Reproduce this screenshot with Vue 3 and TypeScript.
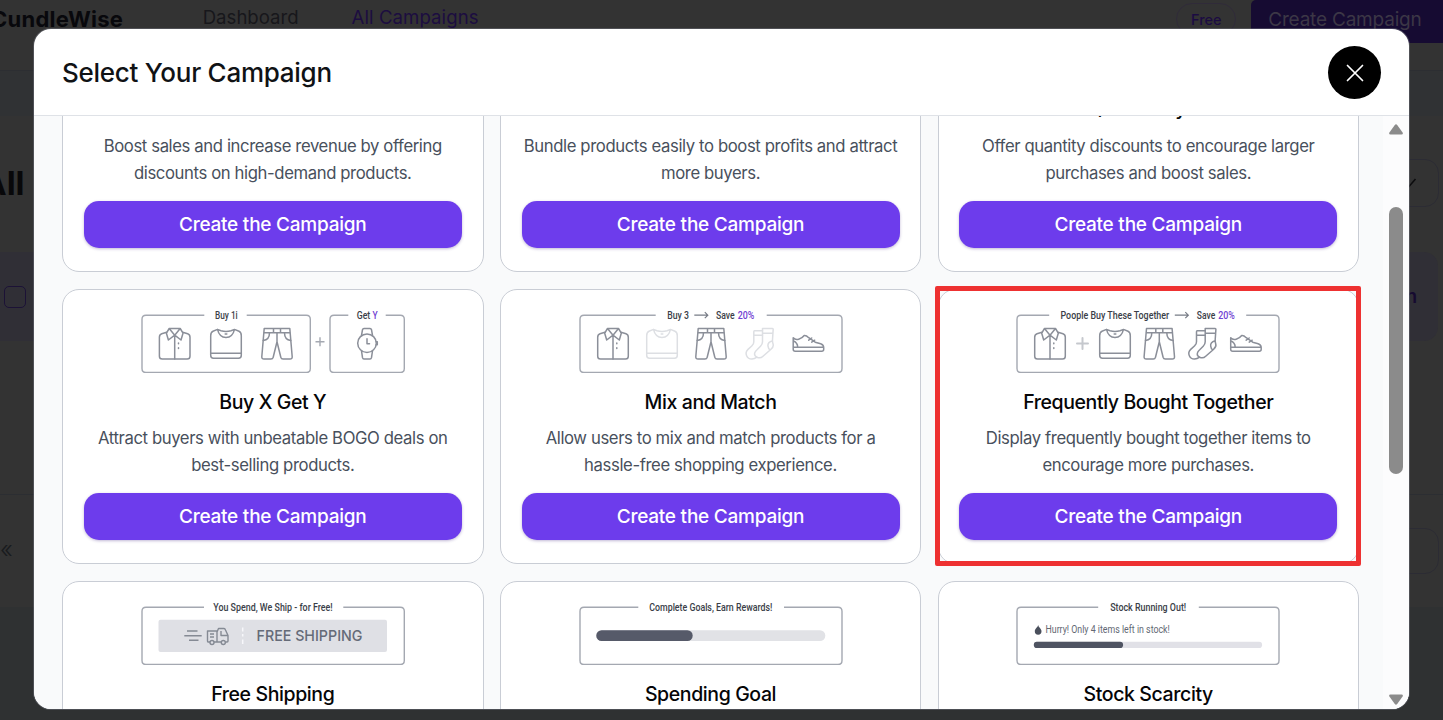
<script setup lang="ts">
interface Label { text: string; x: number; w: number; accent?: boolean }
interface Glyph { name: string; x: number; faint?: boolean }
interface Campaign {
  title: string
  lines: [string, string]
  frame: string[]
  labels: Label[]
  glyphs?: Glyph[]
  arrow?: number
  art?: 'shipping' | 'goal' | 'stock'
  highlighted?: boolean
}

// Frame outline with a gap in the top edge for the caption.
const frame = (left: number, right: number, gapStart: number, gapEnd: number): string =>
  `M${gapStart} 10.2H${left + 4}q-4 0-4 4V63.400q0 4 4 4H${right - 4}q4 0 4-4V14.200q0-4-4-4H${gapEnd}`

const campaigns: Campaign[] = [
  { title: 'Volume Discount', lines: ['Boost sales and increase revenue by offering', 'discounts on high-demand products.'], frame: [], labels: [] },
  { title: 'Bundle Discount', lines: ['Bundle products easily to boost profits and attract', 'more buyers.'], frame: [], labels: [] },
  { title: 'Volume / Quantity Discount', lines: ['Offer quantity discounts to encourage larger', 'purchases and boost sales.'], frame: [], labels: [] },
  {
    title: 'Buy X Get Y',
    lines: ['Attract buyers with unbeatable BOGO deals on', 'best-selling products.'],
    frame: [frame(1, 169.3, 63.3, 105.7), frame(189, 263.3, 207.3, 244.7), 'M174.5 36.7h9M179 32.2v9'],
    labels: [{ text: 'Buy 1i', x: 74, w: 22.7 }, { text: 'Get', x: 215.7, w: 13.6 }, { text: 'Y', x: 231.5, w: 5.2, accent: true }],
    glyphs: [{ name: 'shirt', x: 17.7 }, { name: 'sweater', x: 69 }, { name: 'pants', x: 120 }, { name: 'watch', x: 216 }],
  },
  {
    title: 'Mix and Match',
    lines: ['Allow users to mix and match products for a', 'hassle-free shopping experience.'],
    frame: [frame(1, 263, 76.7, 187.7)],
    labels: [{ text: 'Buy 3', x: 88.3, w: 21.7 }, { text: 'Save', x: 137, w: 18.7 }, { text: '20%', x: 158.7, w: 16.6, accent: true }],
    arrow: 115.3,
    glyphs: [{ name: 'shirt', x: 18 }, { name: 'sweater', x: 67, faint: true }, { name: 'pants', x: 116 }, { name: 'socks', x: 166.5, faint: true }, { name: 'shoe', x: 213.2 }],
  },
  {
    title: 'Frequently Bought Together',
    lines: ['Display frequently bought together items to', 'encourage more purchases.'],
    frame: [frame(1, 263, 33.2, 230.2)],
    labels: [{ text: 'Poople Buy These Together', x: 44.5, w: 108.7 }, { text: 'Save', x: 180.8, w: 18.4 }, { text: '20%', x: 202.2, w: 16.6, accent: true }],
    arrow: 158.8,
    glyphs: [{ name: 'shirt', x: 18 }, { name: 'plus', x: 61 }, { name: 'sweater', x: 83 }, { name: 'pants', x: 127.3 }, { name: 'socks', x: 172.2 }, { name: 'shoe', x: 213.7 }],
    highlighted: true,
  },
  { title: 'Free Shipping', lines: ['Offer free shipping to increase the', 'average order value.'], frame: [frame(1, 263.3, 63, 202.3)], labels: [{ text: 'You Spend, We Ship - for Free!', x: 72.3, w: 119.4 }], art: 'shipping' },
  { title: 'Spending Goal', lines: ['Reward customers for reaching', 'their spending goals.'], frame: [frame(1, 263, 59.3, 205)], labels: [{ text: 'Complete Goals, Earn Rewards!', x: 70.3, w: 123 }], art: 'goal' },
  { title: 'Stock Scarcity', lines: ['Create urgency by showing', 'limited stock levels.'], frame: [frame(1, 263, 82.2, 182.8)], labels: [{ text: 'Stock Running Out!', x: 94.2, w: 76 }], art: 'stock' },
]
</script>

<template>
  <div class="screen">
    <div class="page" aria-hidden="true">
      <div class="topbar">
        <span class="brand">CundleWise</span>
        <span class="nav">Dashboard</span>
        <span class="nav current">All Campaigns</span>
        <span class="plan">Free</span>
        <span class="create">Create Campaign</span>
      </div>
      <div class="strip"></div>
      <div class="heading">
        <span class="all">All</span>
        <span class="box">
          <svg width="12" height="10" viewBox="0 0 12 10"><path d="M1 7l2 1.500L9.500 1" /></svg>
        </span>
      </div>
      <div class="row"><span class="check"></span><span class="edge">n</span></div>
      <div class="space"></div>
      <div class="pager"><span class="prev">«</span><span class="box pagebox"></span></div>
    </div>

    <section class="modal">
      <header class="head">
        <h1>Select Your Campaign</h1>
        <button class="close" aria-label="Close">
          <svg width="18" height="18" viewBox="0 0 18 18"><path d="M1.500 1.500l15 15M16.500 1.500l-15 15" /></svg>
        </button>
      </header>
      <div class="body">
        <div class="view">
          <div class="grid">
            <article v-for="c in campaigns" :key="c.title" class="card" :class="{ highlighted: c.highlighted }">
              <svg class="art" width="264" height="70" viewBox="0 0 264 70">
                <path v-for="d in c.frame" :key="d" class="frame" :d="d" />
                <text v-for="l in c.labels" :key="l.text" class="label" :class="{ accent: l.accent }" :x="l.x" y="13.900" :textLength="l.w" lengthAdjust="spacingAndGlyphs">{{ l.text }}</text>
                <path v-if="c.arrow" class="arrow" :d="`M${c.arrow} 10.200h13.500m-3-3l3 3-3 3`" />
                <g v-for="g in c.glyphs" :key="g.name" class="glyph" :class="{ faint: g.faint, plus: g.name === 'plus' }" :transform="`translate(${g.x} 22.700)`">
                  <template v-if="g.name === 'shirt'">
                    <path d="M8 4.500L3 6Q.7 6.800.7 9.500V28.500Q.7 31.300 3.500 31.300H28.500Q31.300 31.300 31.300 28.500V9.500Q31.300 6.800 29 6L24 4.500" />
                    <path d="M10.500 .8H21.500L24.300 5.500 22.300 12.300 16 7.500 9.700 12.300 7.700 5.500ZM10.500.8L16 7.500 21.500.8M16 7.500V31.300" />
                    <path d="M19.800 15.300v.8M19.800 20v.8" />
                  </template>
                  <template v-else-if="g.name === 'sweater'">
                    <path d="M7.500 1.700L3 3.500Q.7 4.500.7 8V27.500Q.7 30.500 3.500 30.500H28.500Q31.300 30.500 31.300 27.500V8Q31.300 4.500 29 3.500L24.500 1.700 21 3Q16 4.500 11 3L7.500 1.700C8.500 6 11.500 9.800 16 9.800S23.500 6 24.500 1.700M.7 25.500H31.300" />
                    <path d="M15.200 6.200h1.600" />
                  </template>
                  <template v-else-if="g.name === 'pants'">
                    <path d="M3.200.8H28.800L31.200 29Q31.300 31.300 29 31.300H22Q20.300 31.300 19.800 29.500L16 14 12.200 29.500Q11.700 31.300 10 31.300H3Q.7 31.300.8 29ZM2.700 5H29.300M12.500.8V5M19.500.8V5M16 5V14" />
                    <path d="M8.500 5Q8.500 12 2.200 12.800M23.500 5Q23.500 12 29.800 12.800" />
                  </template>
                  <template v-else-if="g.name === 'watch'">
                    <circle cx="10" cy="15.500" r="9.300" />
                    <path d="M4.500 7.800L5.500 2Q5.800.8 7 .8H13Q14.200.8 14.500 2L15.500 7.800M4.500 23.200L5.500 30Q5.800 31.300 7 31.300H13Q14.200 31.300 14.500 30L15.500 23.200M10 11V16H12.500M19.300 14h1v3h-1" />
                  </template>
                  <template v-else-if="g.name === 'socks'">
                    <path d="M17 .7H27Q27.700.7 27.700 1.500L27 12Q26.800 14 27.500 16Q28.500 19 25.500 21.500L17.500 28.500C14 32 7.500 29 9.500 24.500Q10 23.400 11.500 22L15 18.500Q17 16.500 17 14V1Q17 .7 17 .7ZM17 5.500H27.500M27 13Q21.800 14.500 22.500 18.500 22.800 21 24.500 22.300" />
                    <path d="M17 3H9Q8.300 3 8.300 4V14Q8.300 16.500 6.500 18L2.500 21.700C-1.500 25.500 1.500 31.500 6.500 31.300Q9 31.200 11 29.600M8.300 7.500H17" />
                  </template>
                  <template v-else-if="g.name === 'shoe'">
                    <path d="M1 10Q3 12.500 6.500 11.500T12 7.800Q14 7.500 16.500 10L23 14.500 28.500 16Q31.500 17 31.500 20V21.500Q31.500 23.500 29.500 23.500H3Q1 23.500 1 21.500ZM1 19.500H31.500M1 13Q5.500 15 5.500 19.500M16.500 12.500l3-2.200M19.500 14.500l3-2" />
                  </template>
                  <path v-else d="M0 15.700h11M5.500 10.200v11" />
                </g>

                <template v-if="c.art === 'shipping'">
                  <rect x="17.500" y="22.700" width="228.500" height="32.300" rx="2" fill="#dfe0e5" />
                  <path class="truck" d="M46 34H56.500M43.300 38.700H60.700M48 43.300H57.500" />
                  <path class="truck" d="M69 45H67Q66.500 45 66.500 44V34H76V45H73M80 45H76M76 35L77.500 31.500H83Q84 31.500 84.500 33L87 38.500V44Q87 45 86 45H84.500M80 34V38.500H87M69 37h4M69 40h4" />
                  <circle class="truck" cx="71" cy="45.500" r="2" /><circle class="truck" cx="82.300" cy="45.500" r="2" />
                  <path d="M101.700 30.500v4M101.700 42.500v4.500M101.700 37v2.500" stroke="#f7f7fa" stroke-width="1.500" />
                  <text class="free" x="115.500" y="44.100" textLength="106" lengthAdjust="spacingAndGlyphs">FREE SHIPPING</text>
                </template>
                <template v-else-if="c.art === 'goal'">
                  <rect x="17.300" y="33.300" width="229" height="10.700" rx="5.300" fill="#e1e2e6" />
                  <rect x="17.300" y="33.300" width="96.400" height="10.700" rx="5.300" fill="#565a69" />
                </template>
                <template v-else-if="c.art === 'stock'">
                  <path d="M22.200 28C22.500 30.500 25.500 31.500 25.500 34.300A3.300 3.300 0 0 1 18.800 34.300C18.800 31.500 21.700 30.500 22.200 28Z" fill="#4a505c" />
                  <text class="hurry" x="29.500" y="36.400" textLength="124.300" lengthAdjust="spacingAndGlyphs">Hurry! Only 4 items left in stock!</text>
                  <rect x="17.800" y="44.700" width="228.300" height="6.300" rx="3.100" fill="#e1e1e7" />
                  <rect x="17.800" y="44.700" width="89.300" height="6.300" rx="3.100" fill="#4f5462" />
                </template>
              </svg>
              <h2>{{ c.title }}</h2>
              <p>{{ c.lines[0] }}<br />{{ c.lines[1] }}</p>
              <button class="go">Create the Campaign</button>
            </article>
          </div>
        </div>
        <div class="scrollbar">
          <svg width="14" height="11" viewBox="0 0 14 11"><path d="M5.800 1Q7-.4 8.200 1L13.600 8.500Q14.500 10.500 12.500 10.500H1.500Q-.5 10.500.4 8.500Z" /></svg>
          <span class="thumb"></span>
          <svg width="14" height="11" viewBox="0 0 14 11"><path d="M5.800 10Q7 11.400 8.200 10L13.600 2.500Q14.500.5 12.500.5H1.500Q-.5.5.4 2.500Z" /></svg>
        </div>
      </div>
    </section>
  </div>
</template>

<style scoped>
.screen {
  position: relative;
  width: 1443px;
  height: 720px;
  overflow: hidden;
  background: #2f3132;
  font-family: Inter, "Liberation Sans", sans-serif;
}
.page { display: flex; flex-direction: column; }
.topbar {
  height: 71px;
  box-sizing: border-box;
  display: flex;
  align-items: flex-start;
  white-space: nowrap;
  background: #333;
  border-bottom: 1px solid #2c2e32;
  font-size: 18.600px;
  line-height: 22px;
}
.brand { width: 212px; margin-left: -9px; padding-top: 8px; color: #08080c; font-size: 22px; font-weight: 700; letter-spacing: .25px; }
.nav { width: 149px; padding-top: 6px; color: #17171b; }
.current { width: 825px; color: #1c0d40; letter-spacing: .08px; }
.plan {
  width: 60px;
  height: 32px;
  box-sizing: border-box;
  margin-top: 3px;
  margin-left: 1px;
  border: 1px solid #302b39;
  border-radius: 16px;
  color: #1b0b42;
  font-size: 14.500px;
  font-weight: 500;
  line-height: 31px;
  text-align: center;
}
.create {
  width: 192px;
  height: 43px;
  box-sizing: border-box;
  margin-left: 15px;
  padding: 9px 0 0 17px;
  border-radius: 5px 0 0 5px;
  background: #160b32;
  color: #3c3746;
  font-size: 19px;
  letter-spacing: -.2px;
}
.strip { height: 45px; background: #303234; }
.heading { height: 136px; display: flex; justify-content: space-between; align-items: flex-start; background: #333; }
.all { margin: 50px 0 0 -18px; color: #08080a; font-size: 33px; font-weight: 700; line-height: 34px; }
.box { width: 74px; height: 48px; box-sizing: border-box; margin: 43px 4px 0 0; padding: 18px 0 0 40px; border: 1px solid #2c2c34; border-radius: 14px; line-height: 0; }
.box path { fill: none; stroke: #0b0b0d; stroke-width: 1.500; }
.row { height: 89px; display: flex; align-items: center; justify-content: space-between; margin-right: 5px; border-radius: 0 14px 14px 0; background: #302f36; box-shadow: 40px 0 #333; }
.check { width: 22px; height: 22px; box-sizing: border-box; margin-left: 4px; border: 1px solid #1c1236; border-radius: 5px; }
.edge { margin-right: 21px; color: #160a30; font-size: 19px; font-weight: 600; }
.space { height: 153px; background: #333; border-bottom: 1px solid #2c2e32; }
.pager { height: 112px; display: flex; align-items: flex-start; justify-content: space-between; background: #333; }
.prev { color: #191b1e; font-size: 24px; font-weight: 300; line-height: 28px; padding-top: 41px; }
.pagebox { margin-top: 33px; height: 46px; }

.modal {
  position: absolute;
  left: 34px;
  top: 29px;
  width: 1375px;
  height: 680px;
  display: flex;
  flex-direction: column;
  overflow: hidden;
  border-radius: 17px;
  background: #fff;
  box-shadow: 0 0 0 1px rgba(115, 118, 128, .45);
}
.head {
  height: 87px;
  flex: none;
  box-sizing: border-box;
  display: flex;
  align-items: center;
  justify-content: space-between;
  padding: 1px 28px 0;
  border-bottom: 1px solid #dfe2e7;
}
h1 { margin: 0; color: #101215; font-size: 26px; font-weight: 500; line-height: 32px; letter-spacing: -.27px; white-space: nowrap; }
.close { width: 53px; height: 53px; display: grid; place-items: center; padding: 0; border: 0; border-radius: 50%; background: #000; }
.close path { fill: none; stroke: #fff; stroke-width: 1.700; stroke-linecap: round; }
.body { height: 593px; display: flex; overflow: hidden; background: #f9fafb; }
.view { width: 1349px; box-sizing: border-box; padding-left: 28px; }
.grid {
  width: 1297px;
  display: grid;
  grid-template-columns: repeat(3, 421.500px);
  grid-auto-rows: 274.500px;
  justify-content: space-between;
  row-gap: 17.500px;
  margin-top: -119px;
}
.card {
  position: relative;
  box-sizing: border-box;
  display: flex;
  flex-direction: column;
  align-items: center;
  padding: 15px 20px 0;
  border: 1px solid #c9cdd5;
  border-radius: 17px;
  background: #fff;
}
.highlighted::after {
  content: "";
  position: absolute;
  inset: -4px -3px -3px -4px;
  border: 5px solid #ee3131;
  border-radius: 2px;
}
.art { display: block; flex: none; }
h2 { margin: 13px 0 0; color: #050507; font-size: 19.500px; font-weight: 500; line-height: 28px; letter-spacing: -.4px; white-space: nowrap; }
p { margin: 9px 0 0; color: #48505c; font-size: 16.700px; line-height: 26.500px; letter-spacing: -.39px; text-align: center; white-space: nowrap; }
.card:nth-child(-n+3) h2 { margin-top: 11px; }
.card:nth-child(-n+3) p { margin-top: 11px; }
.go {
  width: 378px;
  height: 47px;
  flex: none;
  margin-top: 15px;
  padding: 0;
  border: 0;
  border-radius: 15px;
  background: #6d3cec;
  box-shadow: 0 1px 3px rgba(50, 20, 120, .3);
  color: #fff;
  font: 500 19px/46px Inter, "Liberation Sans", sans-serif;
  letter-spacing: -.23px;
}
.scrollbar { width: 26px; box-sizing: border-box; display: flex; flex-direction: column; align-items: center; padding: 8px 0 4px; background: #fcfcfd; fill: #8b8b8b; }
.thumb { width: 14px; height: 267px; margin: 72px 0 auto; border-radius: 7px; background: #8b8b8b; }

.frame { fill: none; stroke: #a4a8b1; stroke-width: 1.400; }
.label { fill: #3a3e48; font: 500 10.500px Roboto, sans-serif; }
.accent { fill: #7040d2; }
.arrow { fill: none; stroke: #777c86; stroke-width: 1.200; }
.glyph { fill: none; stroke: #8b8f99; stroke-width: 1.500; stroke-linejoin: round; stroke-linecap: round; }
.faint { stroke: #dddfe3; }
.plus { stroke: #c5c8cd; stroke-width: 2; }
.truck { fill: none; stroke: #858a94; stroke-width: 1.400; stroke-linejoin: round; }
.free { fill: #656b78; font: 500 15px Inter, sans-serif; }
.hurry { fill: #626873; font: 400 10.300px Roboto, sans-serif; }
</style>

<style>
body { margin: 0; background: #2f3132; }
</style>
